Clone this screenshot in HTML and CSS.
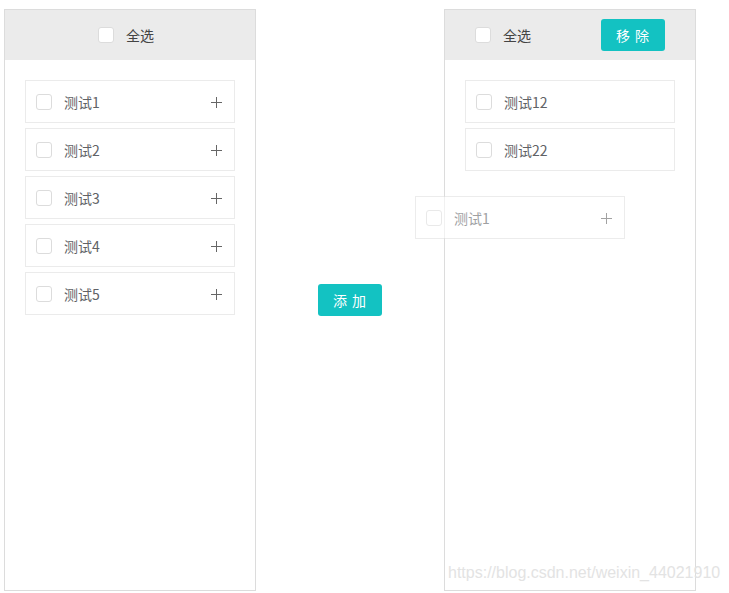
FILE: index.html
```html
<!DOCTYPE html>
<html lang="zh">
<head>
<meta charset="utf-8">
<link rel="stylesheet" href="styles.css">
</head>
<body>
<div class="page">
  <div class="panel">
    <div class="panel-head centered">
      <label class="check-label"><span class="box"></span><span class="head-text">全选</span></label>
    </div>
    <div class="list">
      <div class="item"><span class="box"></span><span class="name">测试1</span><span class="plus"></span></div>
      <div class="item"><span class="box"></span><span class="name">测试2</span><span class="plus"></span></div>
      <div class="item"><span class="box"></span><span class="name">测试3</span><span class="plus"></span></div>
      <div class="item"><span class="box"></span><span class="name">测试4</span><span class="plus"></span></div>
      <div class="item"><span class="box"></span><span class="name">测试5</span><span class="plus"></span></div>
    </div>
  </div>
  <div class="middle">
    <button class="btn">添 加</button>
  </div>
  <div class="panel">
    <div class="panel-head spread">
      <label class="check-label"><span class="box"></span><span class="head-text">全选</span></label>
      <button class="btn">移 除</button>
    </div>
    <div class="list">
      <div class="item"><span class="box"></span><span class="name">测试12</span></div>
      <div class="item"><span class="box"></span><span class="name">测试22</span></div>
    </div>
  </div>
  <div class="item dragging"><span class="box"></span><span class="name">测试1</span><span class="plus"></span></div>
  <div class="watermark">https://blog.csdn.net/weixin_44021910</div>
</div>
</body>
</html>
```
FILE: styles.css
```css
* { box-sizing: border-box; }
html, body { margin: 0; padding: 0; background: #fff; }
body {
  font-family: "Noto Sans CJK SC", "Noto Sans", sans-serif;
  font-size: 14px;
  color: #666;
}
.page {
  position: relative;
  width: 729px;
  height: 593px;
  padding: 9px 0 0 4px;
  display: flex;
  align-items: flex-start;
}
.panel {
  width: 252px;
  height: 582px;
  border: 1px solid #dcdcdc;
  background: #fff;
  display: flex;
  flex-direction: column;
}
.panel-head {
  height: 50px;
  background: #ebebeb;
  display: flex;
  align-items: center;
}
.panel-head.centered { justify-content: center; padding-right: 8px; }
.panel-head.spread { justify-content: space-between; padding: 0 30px 0 30px; }
.check-label { display: flex; align-items: center; }
.head-text { margin-left: 12px; color: #444; line-height: 20px; }
.box {
  width: 16px;
  height: 16px;
  border: 1px solid #dcdcdc;
  border-radius: 3px;
  background: #fff;
  flex: none;
}
.list {
  padding: 20px 20px;
  display: flex;
  flex-direction: column;
  gap: 5px;
}
.item {
  height: 43px;
  width: 210px;
  border: 1px solid #ebebeb;
  background: #fff;
  display: flex;
  align-items: center;
  padding: 1px 12px 0 10px;
}
.item .name { margin-left: 12px; flex: 1; line-height: 20px; color: #606266; }
.plus {
  position: relative;
  width: 11px;
  height: 11px;
  flex: none;
}
.plus::before, .plus::after {
  content: "";
  position: absolute;
  background: #666;
}
.plus::before { left: 0; right: 0; top: 5px; height: 1px; }
.plus::after { top: 0; bottom: 0; left: 5px; width: 1px; }
.middle {
  width: 188px;
  height: 582px;
  display: flex;
  justify-content: center;
  align-items: center;
}
.btn {
  width: 64px;
  height: 32px;
  border: none;
  border-radius: 3px;
  background: #13c2c2;
  color: #fff;
  font-family: "Noto Sans CJK SC", sans-serif;
  font-size: 14px;
  padding: 0;
  letter-spacing: 1px;
}
.dragging {
  position: absolute;
  left: 415px;
  top: 196px;
  opacity: 0.6;
  border-color: #e0e0e0;
}
.watermark {
  position: absolute;
  left: 448px;
  top: 564px;
  font-family: "Liberation Sans", Arial, sans-serif;
  font-size: 16px;
  color: #e3e3e3;
  white-space: nowrap;
}
```
